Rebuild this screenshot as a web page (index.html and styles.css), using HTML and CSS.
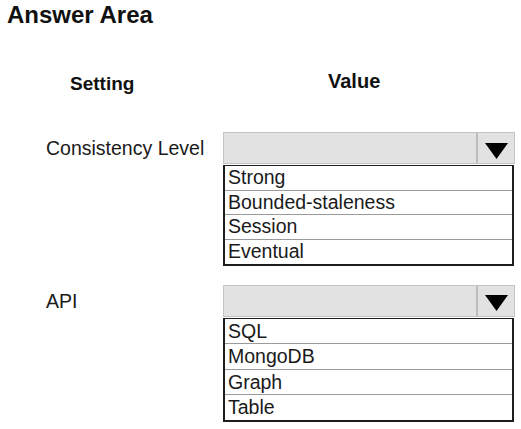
FILE: index.html
```html
<!DOCTYPE html>
<html>
<head>
<meta charset="utf-8">
<link rel="stylesheet" href="styles.css">
</head>
<body>
<div class="page">
  <h1 class="title">Answer Area</h1>
  <div class="grid">
    <div class="head head-setting">Setting</div>
    <div class="head head-value">Value</div>

    <div class="label">Consistency Level</div>
    <div class="field">
      <div class="select">
        <div class="select-box"></div>
        <div class="select-btn">
          <svg width="23" height="16" viewBox="0 0 23 16"><polygon points="0,0 23,0 11.5,16" fill="#000"/></svg>
        </div>
      </div>
      <ul class="options options-a">
        <li>Strong</li>
        <li>Bounded-staleness</li>
        <li>Session</li>
        <li>Eventual</li>
      </ul>
    </div>

    <div class="label label-api">API</div>
    <div class="field field-api">
      <div class="select">
        <div class="select-box"></div>
        <div class="select-btn">
          <svg width="23" height="16" viewBox="0 0 23 16"><polygon points="0,0 23,0 11.5,16" fill="#000"/></svg>
        </div>
      </div>
      <ul class="options options-b">
        <li>SQL</li>
        <li>MongoDB</li>
        <li>Graph</li>
        <li>Table</li>
      </ul>
    </div>
  </div>
</div>
</body>
</html>
```

FILE: styles.css
```css
html, body {
  margin: 0;
  padding: 0;
  background: #ffffff;
}
body {
  font-family: "Liberation Sans", Arial, sans-serif;
  color: #1a1a1a;
}
.page {
  width: 521px;
  height: 429px;
  overflow: hidden;
}
.title {
  margin: 0;
  padding: 1px 0 0 7px;
  font-size: 24px;
  line-height: 28px;
  font-weight: bold;
  color: #111;
}
.grid {
  display: grid;
  grid-template-columns: 177px 292px;
  margin: 40px 0 0 46px;
}
.head {
  font-weight: bold;
  color: #111;
  line-height: 24px;
}
.head-setting {
  font-size: 19px;
  padding: 3px 0 0 24px;
}
.head-value {
  font-size: 20px;
  padding-left: 105px;
}
.label {
  font-size: 19.5px;
  line-height: 23px;
  padding-top: 5px;
  margin-top: 36px;
}
.field {
  margin-top: 36px;
}
.label-api, .field-api {
  margin-top: 19px;
}
.select {
  display: flex;
  height: 32px;
  box-sizing: border-box;
  border: 1px solid #c4c4c4;
  background: #e2e2e2;
}
.select-box {
  flex: 1;
}
.select-btn {
  width: 38px;
  border-left: 2px solid #bdbdbd;
  display: flex;
  align-items: center;
  justify-content: center;
  padding-top: 5px;
  box-sizing: border-box;
}
.options {
  list-style: none;
  margin: 1px 1px 0 0;
  padding: 0;
  border: 2px solid #1e1e1e;
  border-top-width: 1.5px;
}
.options li {
  font-size: 19.5px;
  line-height: 23px;
  height: 23.7px;
  padding-left: 3px;
  border-top: 1px solid #9a9a9a;
  color: #1a1a1a;
}
.options li:first-child {
  border-top: none;
}
.options-b li {
  height: 24.5px;
  line-height: 25px;
}
```
